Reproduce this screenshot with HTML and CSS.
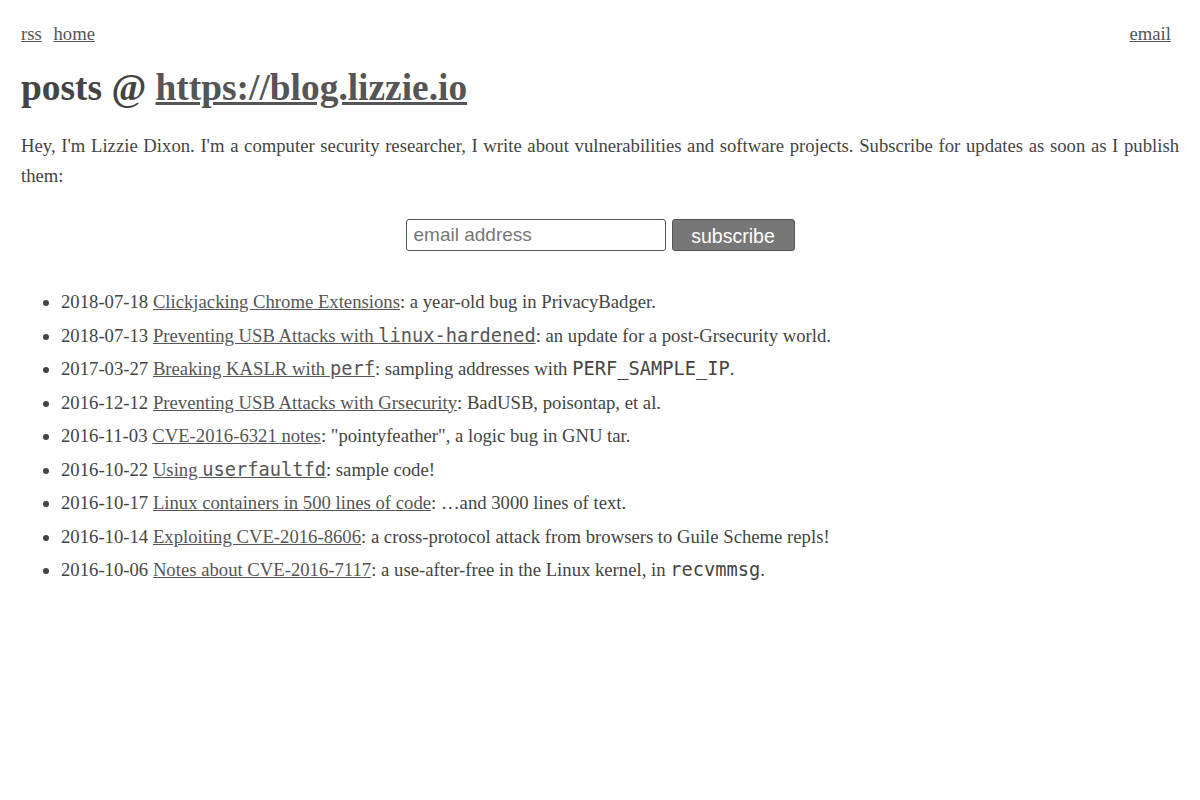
FILE: index.html
```html
<!DOCTYPE html>
<html>
<head>
<meta charset="utf-8">
<link rel="stylesheet" href="styles.css">
</head>
<body>
<nav class="nav">
  <div class="nav-left"><a href="#">rss</a> <a href="#">home</a></div>
  <div class="nav-right"><a href="#">email</a></div>
</nav>
<h1 class="title">posts @ <a href="#">https://blog.lizzie.io</a></h1>
<p class="intro">Hey, I'm Lizzie Dixon. I'm a computer security researcher, I write about vulnerabilities and software projects. Subscribe for updates as soon as I publish them:</p>
<form class="subscribe">
  <input class="email" type="text" placeholder="email address">
  <button class="btn" type="button">subscribe</button>
</form>
<ul class="posts">
  <li>2018-07-18 <a href="#">Clickjacking Chrome Extensions</a>: a year-old bug in PrivacyBadger.</li>
  <li>2018-07-13 <a href="#">Preventing USB Attacks with <code>linux-hardened</code></a>: an update for a post-Grsecurity world.</li>
  <li>2017-03-27 <a href="#">Breaking KASLR with <code>perf</code></a>: sampling addresses with <code>PERF_SAMPLE_IP</code>.</li>
  <li>2016-12-12 <a href="#">Preventing USB Attacks with Grsecurity</a>: BadUSB, poisontap, et al.</li>
  <li>2016-11-03 <a href="#">CVE-2016-6321 notes</a>: "pointyfeather", a logic bug in GNU tar.</li>
  <li>2016-10-22 <a href="#">Using <code>userfaultfd</code></a>: sample code!</li>
  <li>2016-10-17 <a href="#">Linux containers in 500 lines of code</a>: …and 3000 lines of text.</li>
  <li>2016-10-14 <a href="#">Exploiting CVE-2016-8606</a>: a cross-protocol attack from browsers to Guile Scheme repls!</li>
  <li>2016-10-06 <a href="#">Notes about CVE-2016-7117</a>: a use-after-free in the Linux kernel, in <code>recvmmsg</code>.</li>
</ul>
</body>
</html>
```
FILE: styles.css
```css
html, body {
  margin: 0;
  padding: 0;
  background: #fff;
}
body {
  padding: 0 21px;
  font-family: "Liberation Serif", "Times New Roman", serif;
  font-size: 18.7px;
  color: #444;
}
a {
  color: #555;
  text-decoration: underline;
}
.nav {
  display: flex;
  justify-content: space-between;
  padding-top: 22px;
  line-height: 24px;
  padding-right: 8px;
}
.nav-left a {
  margin-right: 7px;
}
.title {
  margin: 20px 0 0 0;
  font-size: 37.4px;
  line-height: 44px;
  font-weight: bold;
}
.intro {
  margin: 21px 0 0 0;
  line-height: 30px;
  text-align: justify;
}
.subscribe {
  display: flex;
  justify-content: center;
  gap: 6px;
  margin-top: 28px;
}
.email {
  box-sizing: border-box;
  width: 260px;
  height: 32px;
  border: 1px solid #555;
  border-radius: 3px;
  padding: 0 7px;
  font-family: "Liberation Sans", Arial, sans-serif;
  font-size: 19px;
  color: #444;
}
.email::placeholder {
  color: #777;
}
.btn {
  box-sizing: border-box;
  width: 123px;
  height: 32px;
  border: 1px solid #555;
  border-radius: 3px;
  background: #777;
  color: #fff;
  font-family: "Liberation Sans", Arial, sans-serif;
  font-size: 19.5px;
  padding: 2px 0 0 0;
}
.posts {
  margin: 34px 0 0 0;
  padding-left: 40px;
}
.posts li {
  line-height: 33.5px;
}
code {
  font-family: "DejaVu Sans Mono", monospace;
  font-size: 1em;
  line-height: 1;
}
```
